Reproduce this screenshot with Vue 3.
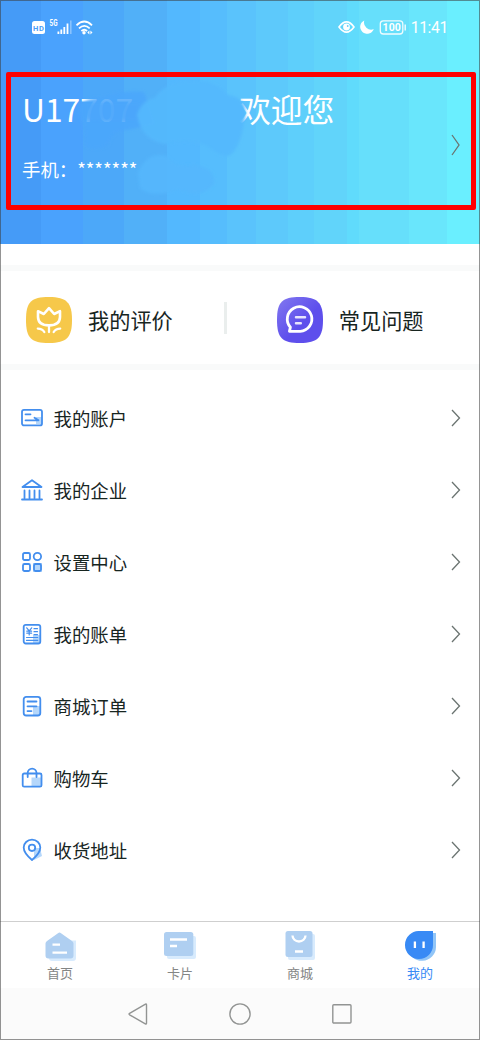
<script setup>
const menu = [
  { id: 'account', label: '我的账户' },
  { id: 'company', label: '我的企业' },
  { id: 'settings', label: '设置中心' },
  { id: 'bill', label: '我的账单' },
  { id: 'order', label: '商城订单' },
  { id: 'cart', label: '购物车' },
  { id: 'address', label: '收货地址' },
]
const tabs = [
  { id: 'home', label: '首页' },
  { id: 'card', label: '卡片' },
  { id: 'mall', label: '商城' },
  { id: 'mine', label: '我的', active: true },
]
</script>

<template>
  <main class="phone">
    <header class="hero">
      <div class="status">
        <svg class="status-left" width="64" height="20" viewBox="0 0 64 20">
          <rect x="0" y="4" width="13" height="13" rx="2.5" fill="#fff" />
          <text x="1.1" y="13.6" class="hd" textLength="10.8">HD</text>
          <text x="17.5" y="9.2" class="fiveg" textLength="8" lengthAdjust="spacingAndGlyphs">5G</text>
          <g fill="#fff">
            <rect x="25.5" y="14.5" width="1.8" height="2.5" /><rect x="28.4" y="12.5" width="1.8" height="4.5" />
            <rect x="31.4" y="10" width="1.8" height="7" /><rect x="34.6" y="6.5" width="1.8" height="10.5" />
            <rect x="38" y="3.5" width="1.6" height="13.5" opacity=".35" />
          </g>
          <g fill="none" stroke="#fff" stroke-width="1.8">
            <path d="M44.5 8.3Q52.3.8 60 8.3" /><path d="M47 11.4Q52.3 6.3 57.7 11.4" /><path d="M49.4 14Q52.3 11.4 55.1 14" />
          </g>
          <circle cx="52" cy="15.8" r="1.7" fill="#fff" />
          <path d="M55.3 15.5l2.1-1.9v3.8zM60.5 15.5l-2.1-1.9v3.8z" fill="#fff" />
        </svg>
        <div class="status-right">
          <svg width="69" height="20" viewBox="0 0 69 20">
            <path d="M1 10Q8.5-.3 16 10Q8.5 20.3 1 10Z" fill="none" stroke="#fff" stroke-width="1.6" />
            <circle cx="8.5" cy="10" r="3.4" fill="#fff" /><circle cx="9.7" cy="9" r=".9" fill="#69cffa" />
            <path d="M26.3 3.4A7 7 0 1 0 35.8 12.1A7.2 7.2 0 0 1 26.3 3.4Z" fill="#fff" />
            <rect x="42.3" y="3.8" width="22.5" height="13.2" rx="3" fill="none" stroke="#fff" stroke-width="1.3" opacity=".9" />
            <text x="44.4" y="14.2" class="battery" textLength="18.5">100</text>
            <rect x="66.5" y="7.5" width="1.4" height="6" fill="#fff" opacity=".9" />
          </svg>
          <span class="time">11:41</span>
        </div>
      </div>
      <section class="profile">
        <div class="profile-text">
          <div class="welcome"><span class="user">U17707</span><span>欢迎您</span></div>
          <div class="mobile">手机：<span>*******</span></div>
        </div>
        <svg class="chevron" width="12" height="24" viewBox="0 0 12 24"><path d="M2 2l7 10-7 10" /></svg>
        <svg class="smudge" width="250" height="130" viewBox="0 0 250 130">
          <defs><filter id="soft" x="-10%" y="-10%" width="120%" height="120%"><feGaussianBlur stdDeviation="1.6" /></filter></defs>
          <g filter="url(#soft)">
            <path d="M70 25Q77 17 94 17Q112 10 134 12L145 44L117 50Q102 50 99 64Q90 72 75 66L74 46Q68 35 70 25Z" fill="#4aa6fb" opacity=".86" />
            <path d="M76 23H129V39Q104 42 76 39Z" fill="#4aa5fb" opacity=".7" />
            <path d="M127 35Q132 20 145 18Q153 5 174 1Q202-3 218 15Q241 18 234 43Q230 69 219 76Q207 75 198 66Q176 58 156 64Q132 61 127 35Z" fill="#54b9fd" opacity=".94" />
            <path d="M128 93Q137 71 157 76Q164 88 184 85Q206 88 204 104Q190 120 169 109Q142 119 130 108Z" fill="#54b7fd" opacity=".9" />
          </g>
        </svg>
      </section>
    </header>

    <section class="shortcuts">
      <div class="shortcut">
        <svg width="46" height="46" viewBox="0 0 46 46">
          <path d="M23 0C41 0 46 6 46 23S41 46 23 46S0 41 0 23S5 0 23 0Z" fill="#f6c84a" />
          <g fill="none" stroke="#fff" stroke-linejoin="round" stroke-linecap="round">
            <path d="M12 14.2L17.8 17L23 11.2L28.2 17L34 14.2V20Q33.8 28.4 23 28.4T12 20Z" stroke-width="2.6" />
            <path d="M23 29V35M11.8 31.6Q16.3 31.6 18.3 35M34.2 31.6Q29.7 31.6 27.7 35" stroke-width="2.3" />
          </g>
        </svg>
        <span>我的评价</span>
      </div>
      <i class="divider"></i>
      <div class="shortcut">
        <svg width="46" height="46" viewBox="0 0 46 46">
          <defs><linearGradient id="violet" x1="0" y1="0" x2=".75" y2=".75"><stop offset=".15" stop-color="#7b70ef" /><stop offset=".75" stop-color="#5e4fec" /></linearGradient></defs>
          <path d="M23 0C41 0 46 6 46 23S41 46 23 46S0 41 0 23S5 0 23 0Z" fill="url(#violet)" />
          <g fill="none" stroke="#fff" stroke-linejoin="round" stroke-linecap="round">
            <path d="M12.4 34.3L13.4 30.2A12.3 12.3 0 1 1 23.2 34.3Z" stroke-width="2.8" />
            <path d="M19 20.2H28M19 26.3H23.8" stroke-width="2.5" opacity=".85" />
          </g>
        </svg>
        <span>常见问题</span>
      </div>
    </section>

    <nav class="menu">
      <div v-for="m in menu" :key="m.id" class="row">
        <svg class="row-icon" width="24" height="24" viewBox="0 0 24 24">
          <template v-if="m.id === 'account'">
            <path d="M16 11h6v7h-6z" class="shade" />
            <rect x="2" y="3.8" width="20" height="15.6" rx="2" /><path d="M5.5 8.3h5M5.5 14.3h12.5M14.5 11.7l4 2.6" />
          </template>
          <template v-else-if="m.id === 'company'">
            <path d="M12 2.2L21.5 9h-19ZM4.5 12.5V20M9.5 12.5V20M14.5 12.5V20M19.5 12.5V20M2 21.5h20" />
          </template>
          <template v-else-if="m.id === 'settings'">
            <path d="M13 13h9v9h-9z" class="shade" />
            <rect x="3" y="3" width="7" height="7" rx="1.5" /><circle cx="17.4" cy="6.5" r="3.7" />
            <rect x="3" y="14" width="7" height="7" rx="1.5" /><rect x="14" y="14" width="7" height="7" rx="1.5" />
          </template>
          <template v-else-if="m.id === 'bill'">
            <path d="M13 13h8v8h-8z" class="shade" />
            <rect x="3.7" y="2.8" width="16.6" height="18.7" rx="2" />
            <g stroke-width="1.2"><path d="M6.7 5.8l2.5 3 2.5-3M9.2 8.8V13M6.8 9.2h4.8M6.8 11.2h4.8M14 6.7h3.5M14 9.7h3.5M14 12.7h3.5M6.5 15.5h11.2M6.5 18.4h11.2" /></g>
          </template>
          <template v-else-if="m.id === 'order'">
            <path d="M13 12h8v9h-8z" class="shade" />
            <rect x="3.7" y="2.8" width="16.6" height="18.7" rx="2.5" /><path d="M7.5 7.5h9M7.5 12.3h9M7.5 17.1h4" />
          </template>
          <template v-else-if="m.id === 'cart'">
            <path d="M11.5 11.5h10v9h-10z" class="shade" />
            <rect x="2.7" y="7.5" width="18.8" height="13.2" rx="1.5" /><path d="M7.7 11V7a4.4 4.4 0 0 1 8.8 0v4" />
          </template>
          <template v-else>
            <path d="M14 10h6l2 8-8 4z" class="shade" />
            <path d="M12 22Q3.7 15 3.7 9.5a8.3 7.8 0 0 1 16.6 0Q20.3 15 12 22Z" /><circle cx="12" cy="9.8" r="3.2" />
          </template>
        </svg>
        <span class="row-label">{{ m.label }}</span>
        <svg class="chevron" width="12" height="20" viewBox="0 0 12 20"><path d="M2 2l7.5 8L2 18" /></svg>
      </div>
    </nav>

    <nav class="tabs">
      <div v-for="t in tabs" :key="t.id" class="tab" :class="{ active: t.active }">
        <svg width="34" height="32" viewBox="0 0 34 32">
          <template v-if="t.id === 'home'">
            <path d="M8 13L20 9.5H33V27Q33 30 30 30H9Q6 30 6 27Z" class="pale" />
            <path d="M2.5 12.5Q2.5 11 4 10L15 2.2Q16.5 1 18 2.2L29 10Q30.5 11 30.5 12.5V24.5Q30.5 27.5 27.5 27.5H5.5Q2.5 27.5 2.5 24.5Z" class="mid" />
            <path d="M9.5 13.7h7.5M9.5 21.7H24" class="mark" />
          </template>
          <template v-else-if="t.id === 'card'">
            <rect x="4" y="5" width="29" height="23" rx="2" class="pale" /><rect x="1" y="1" width="29.3" height="24" rx="2.5" class="mid" />
            <path d="M7 8.5h17M7 15h7" class="mark" />
          </template>
          <template v-else-if="t.id === 'mall'">
            <rect x="5" y="3" width="27" height="26" rx="2" class="pale" /><rect x="2.5" y="0" width="27" height="26" rx="2.5" class="mid" />
            <path d="M9.5 4.5a6.5 6 0 0 0 13 0M12 20.5h8" class="mark" />
          </template>
          <template v-else>
            <path d="M17 2H33V16A14 14 0 1 1 17 2Z" fill="#91c5f7" />
            <path d="M16.5 0H30V14A14 14 0 1 1 16.5 0Z" fill="#388af5" />
            <path d="M11.9 10.5v6.5M20.6 10.5v6.5" class="mark" />
          </template>
        </svg>
        <span>{{ t.label }}</span>
      </div>
    </nav>

    <footer class="system">
      <svg width="22" height="24" viewBox="0 0 22 24"><path d="M18.5 2.2Q19.5 1.6 19.5 3V21Q19.5 22.4 18.3 21.8L2.6 12.8Q1.5 12 2.6 11.3Z" /></svg>
      <svg width="22" height="24" viewBox="0 0 22 24"><circle cx="11" cy="12" r="10.1" /></svg>
      <svg width="22" height="24" viewBox="0 0 22 24"><rect x="1.8" y="2.8" width="18.2" height="18.2" rx="1" /></svg>
    </footer>
  </main>
</template>

<style>
body { margin: 0; }
</style>

<style scoped>
.phone {
  position: relative;
  box-sizing: border-box;
  width: 480px;
  height: 1040px;
  display: flex;
  flex-direction: column;
  background: #fff;
  color: #17251f;
  font-family: "Noto Sans CJK SC", sans-serif;
  overflow: hidden;
}
.phone::after {
  content: "";
  position: absolute;
  inset: 0;
  border: 1px solid rgba(60, 60, 60, .55);
  pointer-events: none;
}
svg { display: block; flex: none; }
.hero {
  height: 244px;
  flex: none;
  background: linear-gradient(90deg,
    #459bf7 0 41px, #4aa2fd 41px 83px, #4ca8f9 83px 124px, #51b0f8 124px 167px,
    #53b8fe 167px 200px, #56bdfd 200px 227px, #5ac3fc 227px 256px, #5dc9fb 256px 288px,
    #5ecffb 288px 314px, #61d4fa 314px 347px, #60dbfc 347px 359px, #66dffb 359px 409px,
    #69e6fc 409px 447px, #6aefff 447px);
}
.status {
  height: 72px;
  box-sizing: border-box;
  padding: 17px 32px 0 32px;
  display: flex;
  justify-content: space-between;
  align-items: flex-start;
}
.status-right { display: flex; align-items: center; gap: 4px; color: #fff; height: 20px; }
.time { font: 15.7px/20px Roboto, sans-serif; letter-spacing: -.35px; position: relative; top: 1px; }
.hd { font: bold 7.5px Roboto, sans-serif; fill: #4a9df8; }
.fiveg { font: bold 9px Roboto, sans-serif; fill: #fff; }
.battery { font: bold 10.5px Roboto, sans-serif; fill: #fff; }
.profile {
  position: relative;
  box-sizing: border-box;
  height: 138px;
  margin: 0 4px 0 6px;
  border: 5px solid #fe0000;
  border-radius: 2px;
  padding: 0 9px 0 11px;
  display: flex;
  align-items: center;
  justify-content: space-between;
  color: #fff;
}
.profile-text { height: 128px; }
.welcome { display: flex; font-size: 31.8px; line-height: 46px; margin-top: 8px; white-space: nowrap; }
.user { width: 217px; }
.mobile { font-size: 18.4px; line-height: 28px; margin-top: 24px; }
.smudge { position: absolute; left: -1px; top: 3px; }
.chevron { fill: none; stroke: #6b7471; stroke-width: 1.3; position: relative; z-index: 1; }
.profile .chevron { margin-top: 8px; }
.shortcuts {
  height: 105px;
  box-sizing: border-box;
  margin-top: 21px;
  padding-left: 26px;
  border-top: 6px solid #f9fafa;
  border-bottom: 6px solid #f9fafa;
  display: flex;
  align-items: center;
  flex: none;
}
.shortcut { display: flex; align-items: center; gap: 16px; font-size: 21.2px; line-height: 32px; padding-top: 5px; }
.divider { width: 3px; height: 32px; background: #eaeeed; margin: 0 50px 0 51px; }
.menu { padding: 12px 18px 0 20px; height: 551px; box-sizing: border-box; flex: none; }
.row { height: 71px; padding-bottom: 1px; display: flex; align-items: center; }
.row-icon { fill: none; stroke: #438eee; stroke-width: 1.8; stroke-linejoin: round; stroke-linecap: round; }
.row-icon .shade { fill: #b5d7fb; stroke: none; }
.row-label { flex: 1; margin-left: 9.5px; font-size: 18.4px; line-height: 28px; }
.tabs {
  height: 67px;
  box-sizing: border-box;
  border-top: 1px solid #cfcfcf;
  display: grid;
  grid-template-columns: repeat(4, 1fr);
  flex: none;
}
.tab { display: flex; flex-direction: column; align-items: center; padding-top: 9px; font-size: 13px; line-height: 19px; color: #848685; }
.tab.active { color: #388af5; }
.pale { fill: #d8ebfd; }
.mid { fill: #afcff1; }
.mark { fill: none; stroke: #fff; stroke-width: 2.3; }
.system { flex: 1; background: #fbfbfb; display: flex; justify-content: center; align-items: center; gap: 80px; }
.system svg { fill: none; stroke: #929493; stroke-width: 1.4; }
</style>
